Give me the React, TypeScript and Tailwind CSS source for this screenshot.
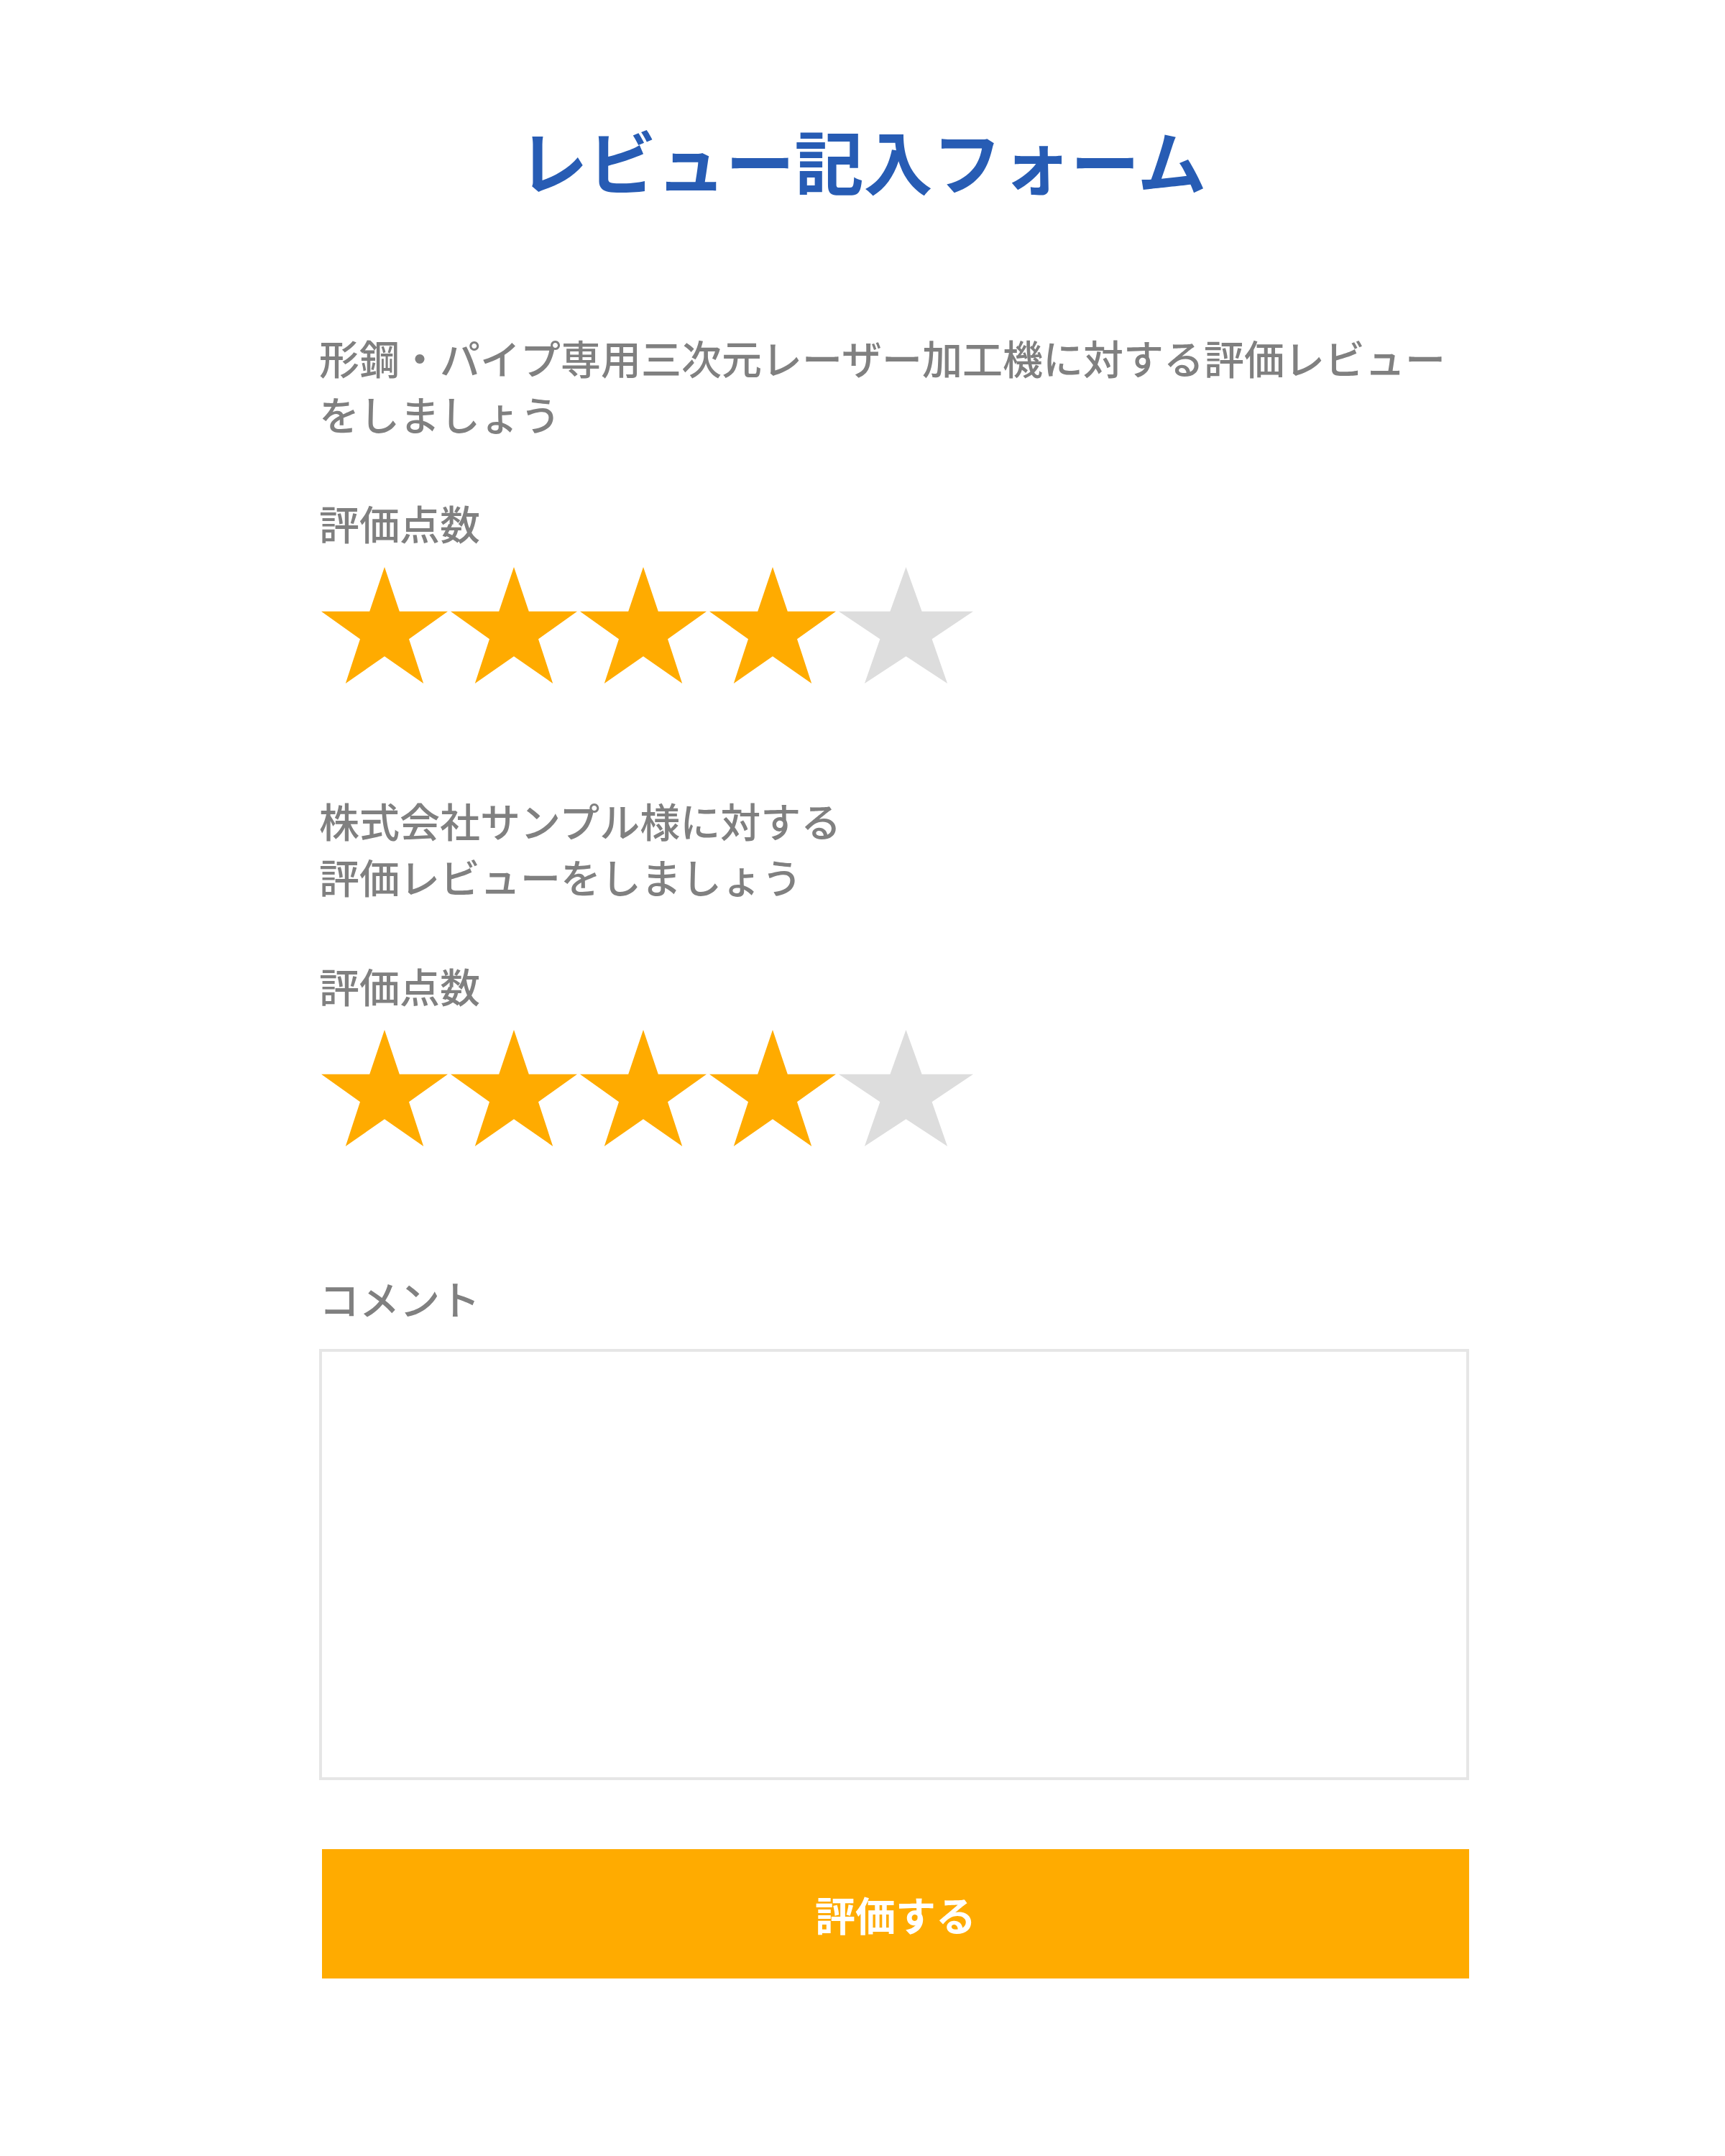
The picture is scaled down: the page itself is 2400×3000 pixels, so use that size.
import React from "react";

const STAR_POINTS =
  "88,0 108.8,61.8 176,61.8 122,100.2 142.2,162 88,124.2 33.8,162 54,100.2 0,61.8 67.2,61.8";

function Star({ filled }: { filled: boolean }) {
  return (
    <svg
      width={filled ? 176 : 187}
      height={162}
      viewBox="0 0 176 162"
      preserveAspectRatio="none"
      className="block shrink-0"
    >
      <polygon points={STAR_POINTS} fill={filled ? "#ffab00" : "#dddddd"} />
    </svg>
  );
}

function Stars({ value }: { value: number }) {
  return (
    <div className="ml-[3px] mt-[23px] flex gap-[4px]">
      {[1, 2, 3, 4, 5].map((i) => (
        <Star key={i} filled={i <= value} />
      ))}
    </div>
  );
}

function Section({ children, first }: { children: React.ReactNode; first?: boolean }) {
  return (
    <div className={first ? "mt-[188px]" : "mt-[151px]"}>
      <p className="text-[56px] font-medium leading-[78px] text-[#808080]">{children}</p>
      <p className="mt-[74px] text-[56px] font-medium leading-[78px] text-[#808080]">評価点数</p>
      <Stars value={4} />
    </div>
  );
}

export default function App() {
  return (
    <div
      className="min-h-[3000px] w-[2400px] bg-white pt-[174px]"
      style={{ fontFamily: '"Noto Sans CJK JP", "Noto Sans", sans-serif' }}
    >
      <h1 className="text-center text-[96px] font-bold leading-[96px] text-[#275cb4]">
        レビュー記入フォーム
      </h1>
      <div className="ml-[444px] w-[1600px]">
        <Section first>
          形鋼・パイプ専用三次元レーザー加工機に対する評価レビュー
          <br />
          をしましょう
        </Section>
        <Section>
          株式会社サンプル様に対する
          <br />
          評価レビューをしましょう
        </Section>
        <p className="mt-[172px] text-[56px] font-medium leading-[78px] text-[#808080]">コメント</p>
        <textarea className="mt-[32px] block h-[600px] w-[1600px] resize-none border-4 border-[#e6e6e6] bg-white outline-none" />
        <button className="ml-[4px] mt-[96px] flex h-[180px] w-[1596px] items-center justify-center bg-[#ffab00] text-[56px] font-bold text-white">
          評価する
        </button>
      </div>
    </div>
  );
}
